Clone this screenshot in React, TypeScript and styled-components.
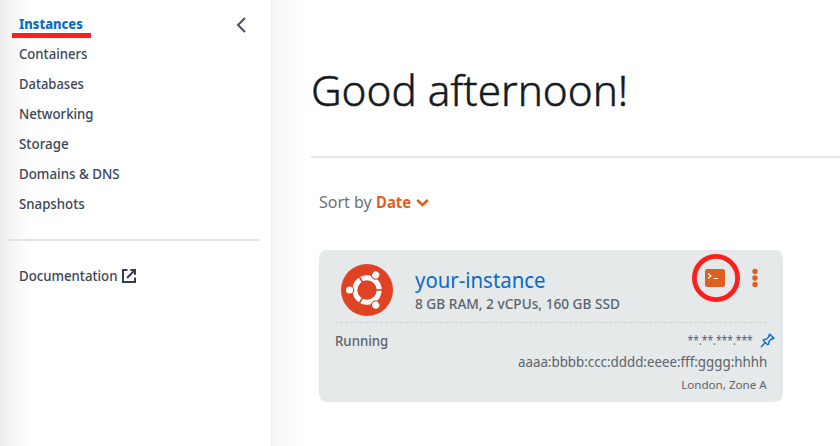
import React from "react";
import styled, { createGlobalStyle } from "styled-components";

const Global = createGlobalStyle`
  * { box-sizing: border-box; }
  html, body { margin: 0; padding: 0; background: #fff; overflow: hidden; }
  body { font-family: "Noto Sans", "Open Sans", sans-serif; }
  svg { display: block; flex: none; }
`;

const Page = styled.div`
  display: flex;
  width: 840px;
  height: 446px;
  overflow: hidden;
`;

const Sidebar = styled.aside`
  flex: none;
  width: 271px;
  height: 446px;
  padding: 9px 12px 0 7px;
  background: linear-gradient(to right, #ebebeb 0, #f4f4f4 10px, #fbfbfb 22px, #fff 36px);
`;

const NavHeader = styled.div`
  display: flex;
  justify-content: space-between;
  padding-right: 13px;
`;

const NavItem = styled.a<{ $active?: boolean }>`
  position: relative;
  display: flex;
  align-items: center;
  height: 30px;
  padding-left: 12px;
  font-size: 14px;
  line-height: 30px;
  font-weight: ${(p) => (p.$active ? 800 : 500)};
  color: ${(p) => (p.$active ? "#0a69cb" : "#3a4556")};
`;

const Underline = styled.span`
  position: absolute;
  left: 5px;
  top: 24px;
  width: 79px;
  height: 5px;
  background: #ff1f1a;
`;

const Condensed = styled.span<{ $scale?: number; $from?: string }>`
  display: inline-block;
  white-space: nowrap;
  transform: scaleX(${(p) => p.$scale ?? 1});
  transform-origin: ${(p) => p.$from ?? "left"} center;
`;

const NavDivider = styled.hr`
  height: 2px;
  margin: 20px 0;
  border: 0;
  background: #e2e3e3;
`;

const Main = styled.main`
  flex: 1;
  min-width: 0;
  padding: 50px 0 0 40px;
  background: linear-gradient(to right, #e9e9e9 0, #f5f5f5 1px, #f9f9f9 12px, #fcfcfc 24px, #fff 38px);
`;

const Greeting = styled.h1`
  height: 106px;
  margin: 0;
  font-size: 43px;
  font-weight: 300;
  line-height: 80px;
  color: #16191f;
  -webkit-text-stroke: 0.5px #16191f;
`;

const MainDivider = styled.hr`
  height: 2px;
  margin: 0;
  border: 0;
  background: #e6e6e6;
`;

const Sort = styled.div`
  display: flex;
  align-items: center;
  height: 28px;
  margin: 30px 0 34px 8px;
  font-size: 16px;
  line-height: 28px;
  color: #687078;
`;

const SortValue = styled.b`
  display: flex;
  align-items: center;
  gap: 2px;
  margin-left: 4px;
  font-weight: 700;
  color: #dd6021;
`;

const Card = styled.section`
  width: 464px;
  height: 152px;
  margin-left: 8px;
  padding: 0 16px;
  border-radius: 8px;
  background: #e5e9ea;
  color: #5b636b;
`;

const CardTop = styled.header`
  display: flex;
  height: 73px;
  padding: 14px 9px 0 6px;
  border-bottom: 1px dashed #cbd0d1;
`;

const Titles = styled.div`
  flex: 1;
  margin: 0 0 0 22px;
`;

const Name = styled.div`
  height: 31px;
  font-size: 22px;
  line-height: 30px;
  color: #0a69cb;
`;

const Specs = styled.div`
  height: 18px;
  font-size: 13.5px;
  font-weight: 500;
  line-height: 18px;
`;

const Actions = styled.div`
  display: flex;
  align-items: flex-start;
  gap: 12px;
  margin-top: -10px;
`;

const CardBottom = styled.div`
  display: flex;
  justify-content: space-between;
  padding-top: 7px;
`;

const Status = styled.div`
  font-size: 14px;
  font-weight: 500;
  line-height: 22px;
`;

const Details = styled.div`
  display: flex;
  flex-direction: column;
  align-items: flex-end;
`;

const Address = styled.div`
  display: flex;
  align-items: center;
  gap: 7px;
  height: 21px;
  margin-right: -8px;
  font-size: 12px;
  line-height: 23px;
`;

const AddressV6 = styled.div`
  height: 20px;
  font-size: 14.5px;
  line-height: 20px;
`;

const Zone = styled.div`
  height: 27px;
  font-size: 11.5px;
  line-height: 27px;
`;

const Collapse = () => (
  <svg width="10" height="30" viewBox="0 0 10 30" fill="none" stroke="#444c5b" strokeWidth="1.9">
    <path d="M9 9 L2 16 L9 23" />
  </svg>
);

const External = () => (
  <svg width="14" height="14" viewBox="0 0 14 14" fill="none" stroke="#343e50" strokeWidth="2">
    <path d="M5.5 1 H1 V13 H13 V8.5" />
    <path d="M8.3 1 H13 V5.7 M12.7 1.3 L5 9" />
  </svg>
);

/* Pulls the icon back over the room left by the condensed label. */
const LinkIcon = styled.span`
  display: block;
  margin-left: -1px;
`;

const Chevron = () => (
  <svg width="13" height="9" viewBox="0 0 13 9" fill="none" stroke="#dd6021" strokeWidth="2.7">
    <path d="M1.2 2 L6.5 7 L11.8 2" />
  </svg>
);

const Ubuntu = () => (
  <svg width="52" height="52" viewBox="-26 -26 52 52">
    <circle r="26" fill="#df4323" />
    <circle r="12.2" fill="none" stroke="#fff" strokeWidth="5" />
    {[0, 120, 240].map((a) => (
      <g key={a} transform={`rotate(${a})`}>
        <path d="M8 0 H17" stroke="#df4323" strokeWidth="1.6" />
        <circle cx="-17.4" r="4.7" fill="#df4323" />
        <circle cx="-17.4" r="3.6" fill="#fff" />
      </g>
    ))}
  </svg>
);

const Terminal = () => (
  <svg width="48" height="48" viewBox="0 0 48 48">
    <circle cx="24" cy="24" r="21.6" fill="none" stroke="#ff1f1a" strokeWidth="4.8" />
    <rect x="13" y="15" width="20" height="18" rx="2.5" fill="#dd6021" />
    <path d="M16 19.5 L19 22 L16 24.5 M21.5 24.5 H26" fill="none" stroke="#fff" strokeWidth="1.2" />
  </svg>
);

const More = () => (
  <svg width="6" height="48" viewBox="0 0 6 48" fill="#dd6021">
    <circle cx="3" cy="17.5" r="2.7" />
    <circle cx="3" cy="24" r="2.7" />
    <circle cx="3" cy="30.5" r="2.7" />
  </svg>
);

const Pin = () => (
  <svg width="15" height="15" viewBox="0 0 15 15" fill="none" stroke="#0a69cb" strokeWidth="1.4">
    <path d="M9.8 1.2 L13.8 5.2 L12.7 6 L11.5 5.9 L9.1 8.3 L8.5 11.3 L7.6 11.7 L3.3 7.4 L3.8 6.5 L6.7 5.9 L9.1 3.5 L9 2.3 Z" />
    <path d="M5.4 9.6 L0.8 14.2" />
  </svg>
);

const links = [
  { label: "Containers", scale: 0.938 },
  { label: "Databases", scale: 0.928 },
  { label: "Networking", scale: 0.942 },
  { label: "Storage", scale: 0.955 },
  { label: "Domains & DNS", scale: 0.95 },
  { label: "Snapshots", scale: 0.945 },
];

export default function App() {
  return (
    <Page>
      <Global />
      <Sidebar>
        <NavHeader>
          <NavItem $active>
            <Condensed $scale={0.922}>Instances</Condensed>
            <Underline />
          </NavItem>
          <Collapse />
        </NavHeader>
        {links.map((link) => (
          <NavItem key={link.label}>
            <Condensed $scale={link.scale}>{link.label}</Condensed>
          </NavItem>
        ))}
        <NavDivider />
        <NavItem>
          <Condensed $scale={0.943}>Documentation</Condensed>
          <LinkIcon>
            <External />
          </LinkIcon>
        </NavItem>
      </Sidebar>
      <Main>
        <Greeting>
          <Condensed $scale={0.982}>Good afternoon!</Condensed>
        </Greeting>
        <MainDivider />
        <Sort>
          <Condensed>Sort by</Condensed>
          <SortValue>
            <Condensed $scale={0.93}>Date</Condensed>
            <Chevron />
          </SortValue>
        </Sort>
        <Card>
          <CardTop>
            <Ubuntu />
            <Titles>
              <Name>
                <Condensed $scale={0.926}>your-instance</Condensed>
              </Name>
              <Specs>
                <Condensed $scale={1.011}>8 GB RAM, 2 vCPUs, 160 GB SSD</Condensed>
              </Specs>
            </Titles>
            <Actions>
              <Terminal />
              <More />
            </Actions>
          </CardTop>
          <CardBottom>
            <Status>
              <Condensed $scale={0.945}>Running</Condensed>
            </Status>
            <Details>
              <Address>
                <Condensed $from="right" $scale={0.86}>**.**.***.***</Condensed>
                <Pin />
              </Address>
              <AddressV6>
                <Condensed $from="right" $scale={0.919}>aaaa:bbbb:ccc:dddd:eeee:fff:gggg:hhhh</Condensed>
              </AddressV6>
              <Zone>
                <Condensed $from="right" $scale={1.01}>London, Zone A</Condensed>
              </Zone>
            </Details>
          </CardBottom>
        </Card>
      </Main>
    </Page>
  );
}
